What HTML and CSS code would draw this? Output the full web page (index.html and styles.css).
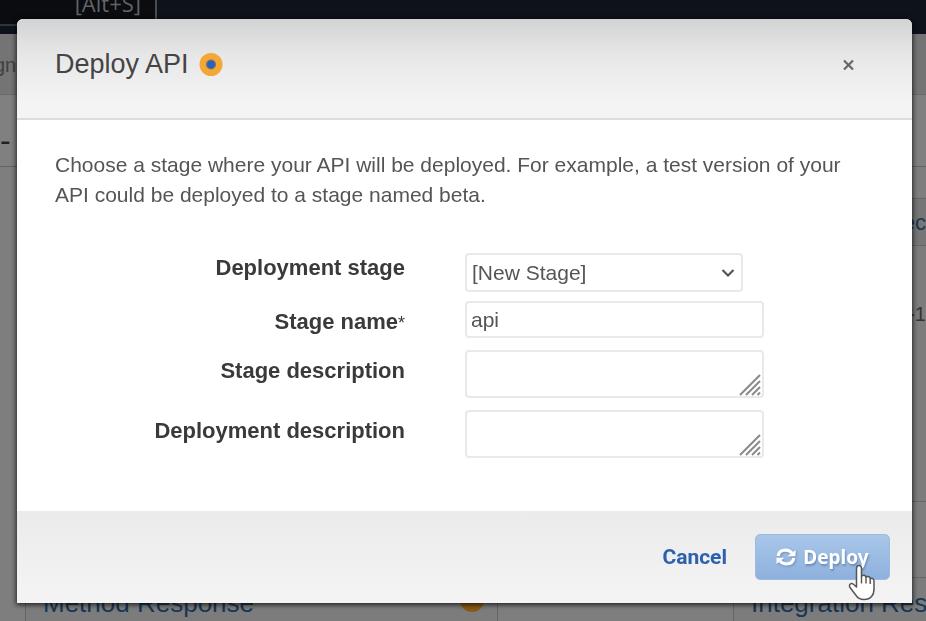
FILE: index.html
```html
<!DOCTYPE html>
<html lang="en">
<head>
<meta charset="utf-8">
<title>Deploy API</title>
<link rel="stylesheet" href="styles.css">
</head>
<body>
<div class="page" aria-hidden="true">
  <div class="topbar"><div class="search">[Alt+S]</div></div>
  <div class="crumbs">gn</div>
  <div class="toolbar">-</div>
  <div class="canvas">
    <div class="card request">
      <div class="card-head">ec</div>
      <div class="card-body">-1</div>
    </div>
    <div class="card method"><span>Method Response</span><i class="dot"></i></div>
    <div class="card integration"><span>Integration Response</span></div>
  </div>
</div>

<div class="overlay">
  <form class="modal" role="dialog" aria-labelledby="title">
    <header class="modal-head">
      <h1 id="title">Deploy API</h1>
      <svg class="beacon" viewBox="0 0 24 24"><circle cx="12" cy="12.500" r="11.500" fill="#f5a733"/><circle cx="12" cy="12.500" r="5" fill="#67728a"/><circle cx="12" cy="12.500" r="3.800" fill="#2c62b5"/></svg>
      <button class="close" type="button" aria-label="Close"><svg viewBox="0 0 11 11"><path d="M1 1.500L10 10.500M10 1.500L1 10.500" stroke="#666" stroke-width="2.200" fill="none"/></svg></button>
    </header>
    <div class="modal-body">
      <p>Choose a stage where your API will be deployed. For example, a test version of your API could be deployed to a stage named beta.</p>
      <div class="fields">
        <label class="for-pick" for="stage">Deployment stage</label>
        <div class="control pick">
          <select id="stage"><option>[New Stage]</option></select>
          <svg class="chevron" viewBox="0 0 14 10"><path d="M1.500 2L7 7.500L12.500 2" fill="none" stroke="#555" stroke-width="2.200"/></svg>
        </div>
        <label for="name">Stage name<span class="star">*</span></label>
        <div class="control"><input id="name" type="text" value="api"></div>
        <label for="sdesc">Stage description</label>
        <div class="control"><textarea id="sdesc"></textarea>
          <svg class="grip" viewBox="0 0 22 22"><path d="M1 21L21 1M7 21L21 7M13 21L21 13M18.500 21L21 18.500" stroke="#8a8a8a" stroke-width="2" fill="none"/></svg></div>
        <label for="ddesc">Deployment description</label>
        <div class="control"><textarea id="ddesc"></textarea>
          <svg class="grip" viewBox="0 0 22 22"><path d="M1 21L21 1M7 21L21 7M13 21L21 13M18.500 21L21 18.500" stroke="#8a8a8a" stroke-width="2" fill="none"/></svg></div>
      </div>
    </div>
    <footer class="modal-foot">
      <button class="cancel" type="button">Cancel</button>
      <button class="deploy" type="button">
        <svg class="sync" viewBox="0 0 20 20"><path d="M2.200 9Q3 3.200 9.500 3.200Q13.500 3.200 16 6" fill="none" stroke="#fff" stroke-width="3.200"/><path d="M19.500 3V9.300H11.500Z" fill="#fff"/><path d="M17.800 11Q17 16.800 10.500 16.800Q6.500 16.800 4 14" fill="none" stroke="#fff" stroke-width="3.200"/><path d="M.5 17V10.700H8.500Z" fill="#fff"/></svg>
        <span>Deploy</span>
        <svg class="cursor" viewBox="0 0 28 37"><path d="M8.500 19.500V4.500Q8.500 1.500 11 1.500T13.500 4.500V12.500Q14 11 16 11.200T18 13.500Q18.500 12.300 20.300 12.500T22.200 15Q23 14 24.500 14.500T26 17V25Q26 30 23.500 32.500Q21 35.500 16 35.500Q11 35.500 8.500 32L2 23.500Q.8 21.300 2.300 20Q4 18.700 6 20.800L8.500 23Z" fill="#fff" stroke="#555" stroke-width="1.500" stroke-linejoin="round"/><path d="M13.500 12.500V19.500M18 13.500V19.500M22.200 15V20" stroke="#555" stroke-width="1.400" fill="none"/></svg>
      </button>
    </footer>
  </form>
</div>
</body>
</html>
```
FILE: styles.css
```css
* { box-sizing: border-box; }

body {
  margin: 0;
  height: 100vh;
  overflow: hidden;
  font-family: "Liberation Sans", Arial, sans-serif;
  color: #444;
}

button, input, select, textarea { font: inherit; color: inherit; margin: 0; }

/* dimmed console behind the dialog */
.page { height: 100vh; display: flex; flex-direction: column; overflow: hidden; background: #7e7e7e; }
.topbar { height: 34px; background: #0e131b; flex: none; }
.search {
  width: 157px; height: 26px; padding-right: 14px;
  border-right: 2px solid #4a4d51; border-bottom: 2px solid #303338;
  background: #0a0c10; color: #606367;
  font-family: "Open Sans", sans-serif; font-size: 22px; line-height: 6px; text-align: right;
}
.crumbs { height: 61px; flex: none; background: #747474; border-bottom: 1px solid #6a6a6a; color: #414141; font-size: 20px; line-height: 62px; text-indent: -6px; }
.toolbar { height: 72px; flex: none; background: #808080; border-bottom: 1px solid #646464; color: #222; font-size: 32px; line-height: 90px; }
.canvas { flex: 1; display: grid; grid-template-columns: 473px 235px 1fr; grid-template-rows: 304px 1fr; row-gap: 75px; padding: 31px 0 0 25px; }
.card { border: 1px solid #666; border-right: 0; border-bottom: 0; background: #7c7c7c; color: #193654; font-size: 26px; white-space: nowrap; overflow: hidden; }
.request { grid-column: 3; text-align: right; border-bottom: 1px solid #666; }
.card-head { height: 47px; line-height: 47px; font-size: 22px; background: #767676; border-bottom: 1px solid #666; }
.card-body { line-height: 136px; color: #333; font-size: 20px; }
.method { grid-column: 1; display: flex; justify-content: space-between; padding: 10px 13px 0 17px; border-right: 1px solid #666; }
.integration { grid-column: 3; padding: 10px 0 0 17px; }
.dot { width: 24px; height: 24px; border-radius: 50%; background: #8a5a14; }

/* dialog */
.overlay { position: fixed; inset: 0; padding: 19px 14px 18px 17px; }
.modal {
  min-height: 100%; display: flex; flex-direction: column;
  background: #fff; border-radius: 6px 6px 0 0; overflow: hidden;
  box-shadow: 0 1px 5px 1px rgba(0, 0, 0, .7);
}
.modal-head {
  display: flex; align-items: center; height: 101px; padding: 0 58px 9px 38px;
  background: linear-gradient(#d2d3d4, #e7e7e7 36%, #f4f4f4 85%);
  border-bottom: 2px solid #dcdcdc;
}
h1 { margin: 0; font-size: 27px; line-height: 32px; font-weight: 400; color: #444; }
.beacon { width: 24px; height: 24px; margin-left: 10px; }
.close { margin-left: auto; padding: 0; border: 0; background: none; display: flex; }
.close svg { width: 11px; height: 11px; }

.modal-body { flex: 1; padding: 30px 38px 52px; }
p { margin: 0; font-size: 21px; line-height: 30px; color: #555; }
.fields { display: grid; grid-template-columns: 350px 299px; column-gap: 60px; row-gap: 12px; margin-top: 43px; }
label { font-size: 22px; line-height: 30px; font-weight: 700; color: #3a3a3a; text-align: right; white-space: nowrap; padding-top: 6px; }
.for-pick { padding-top: 0; }
.star { font-weight: 400; font-size: 18px; }
.control { position: relative; }
.control input, .control select, .control textarea {
  display: block; width: 100%; border: 2px solid #e9e9e9; border-radius: 4px;
  background: #fff; font-size: 21px; outline: 0; color: #555;
}
.pick { width: 278px; margin-bottom: -3px; }
.control select { height: 39px; padding: 0 5px; appearance: none; }
.chevron { position: absolute; right: 8px; top: 15px; width: 14px; height: 10px; pointer-events: none; }
.control input { height: 37px; padding: 0 4px; }
.control textarea { height: 48px; resize: none; }
.grip { position: absolute; right: 3px; bottom: 2px; width: 22px; height: 22px; pointer-events: none; }

.modal-foot {
  display: flex; align-items: center; justify-content: flex-end; gap: 28px;
  height: 92px; padding: 0 22px 0 0; background: linear-gradient(#ebebeb, #f4f4f4);
}
.cancel { padding: 0; border: 0; background: none; font: 700 21px/24px Roboto, sans-serif; color: #2d61ad; }
.deploy {
  position: relative; display: flex; align-items: center; justify-content: center; gap: 7px;
  width: 135px; height: 46px; padding: 0; border: 1px solid #9dbbe0; border-radius: 5px;
  background: linear-gradient(#a9c6e8, #8db0dd);
  color: #fff; font: 700 19px/24px "Noto Sans", sans-serif; text-shadow: 1px 2px 2px #6d8fb8;
}
.sync { width: 20px; height: 20px; filter: drop-shadow(1px 1px 1px #6d8fb8); }
.cursor { position: absolute; right: 13px; bottom: -22px; width: 28px; height: 37px; }
```
